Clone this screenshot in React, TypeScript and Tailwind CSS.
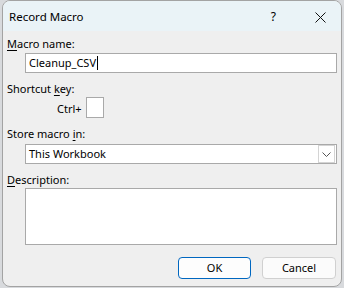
import React from "react";

const font = { fontFamily: '"Noto Sans", "Segoe UI", sans-serif' };

export default function App() {
  return (
    <div className="w-[344px] h-[288px] bg-[#d8dadd] relative overflow-hidden" style={font}>
      <div className="ml-[2px] w-[340px] h-[287px] rounded-[8px] border border-[#a3a3a3] bg-[#efefef] overflow-hidden flex flex-col text-[11px] leading-[16px] text-black">
        {/* title bar */}
        <div className="h-[30px] bg-[#eaf3f7] flex items-center pl-[6px] shrink-0">
          <span className="text-[11.5px] mt-[2px]">Record Macro</span>
          <span className="ml-auto mr-[39px] text-[12px] mt-[2px]">?</span>
          <svg width="11" height="11" viewBox="0 0 11 11" className="mr-[15px] mt-[2px]">
            <path d="M0.5 0.5 L10.5 10.5 M10.5 0.5 L0.5 10.5" stroke="#111" strokeWidth="1" />
          </svg>
        </div>
        {/* body */}
        <div className="flex flex-col pl-[4px] pr-[3px]">
          <div className="mt-[5px] h-[16px]"><span className="underline underline-offset-2">M</span>acro name:</div>
          <div className="mt-[1px] ml-[18px] w-[312px] h-[20px] bg-white border border-[#a9a9a9] flex items-center pl-[3px]">
            <span>Cleanup_CSV</span>
            <span className="w-px h-[14px] bg-black ml-px" />
          </div>
          <div className="mt-[8px] h-[16px]">Shortcut <span className="underline underline-offset-2">k</span>ey:</div>
          <div className="flex items-center">
            <span className="ml-[50px] mt-[2px]">Ctrl+</span>
            <div className="ml-[4px] w-[18px] h-[21px] bg-white border border-[#a9a9a9]" />
          </div>
          <div className="mt-[8px] h-[16px]">Store macro <span className="underline underline-offset-2">i</span>n:</div>
          <div className="mt-[2px] ml-[18px] w-[312px] h-[20px] bg-white border border-[#a9a9a9] flex items-center pl-[3px]">
            <span>This Workbook</span>
            <div className="ml-auto mr-px w-[17px] h-[18px] border border-[#d4d4d4] bg-white flex items-center justify-center">
              <svg width="9" height="5" viewBox="0 0 9 5">
                <path d="M0.5 0.5 L4.5 4.5 L8.5 0.5" stroke="#555" strokeWidth="1" fill="none" />
              </svg>
            </div>
          </div>
          <div className="mt-[8px] h-[16px]"><span className="underline underline-offset-2">D</span>escription:</div>
          <div className="ml-[18px] w-[312px] h-[57px] bg-white border border-[#a9a9a9]" />
          <div className="mt-[12px] flex">
            <div className="ml-[171px] w-[73px] h-[22px] rounded-[4px] border border-[#0067c0] bg-[#fdfdfd] flex items-center justify-center">OK</div>
            <div className="ml-[11px] w-[74px] h-[22px] rounded-[4px] border border-[#d0d0d0] bg-[#fbfbfb] flex items-center justify-center">Cancel</div>
          </div>
        </div>
      </div>
    </div>
  );
}
